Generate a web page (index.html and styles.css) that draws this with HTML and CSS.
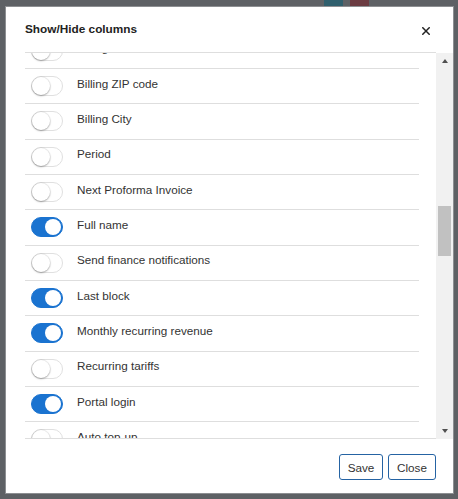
FILE: index.html
```html
<!DOCTYPE html>
<html lang="en">
<head>
<meta charset="utf-8">
<title>Show/Hide columns</title>
<link rel="stylesheet" href="styles.css">
</head>
<body>
<div class="backdrop-strip">
  <span class="chip chip-teal"></span>
  <span class="chip chip-red"></span>
</div>
<div class="modal">
  <div class="modal-header">
    <h2 class="modal-title">Show/Hide columns</h2>
    <button class="close-btn" aria-label="Close">
      <svg width="8" height="8" viewBox="0 0 8 8"><path d="M0.8 0.8L7.2 7.2M7.2 0.8L0.8 7.2" stroke="#222" stroke-width="1.5" stroke-linecap="square"/></svg>
    </button>
  </div>
  <div class="modal-body">
    <div class="viewport">
      <ul class="col-list">
        <li class="row"><span class="toggle"></span><span class="label">Billing address</span></li>
        <li class="row"><span class="toggle"></span><span class="label">Billing ZIP code</span></li>
        <li class="row"><span class="toggle"></span><span class="label">Billing City</span></li>
        <li class="row"><span class="toggle"></span><span class="label">Period</span></li>
        <li class="row"><span class="toggle"></span><span class="label">Next Proforma Invoice</span></li>
        <li class="row"><span class="toggle on"></span><span class="label">Full name</span></li>
        <li class="row"><span class="toggle"></span><span class="label">Send finance notifications</span></li>
        <li class="row"><span class="toggle on"></span><span class="label">Last block</span></li>
        <li class="row"><span class="toggle on"></span><span class="label">Monthly recurring revenue</span></li>
        <li class="row"><span class="toggle"></span><span class="label">Recurring tariffs</span></li>
        <li class="row"><span class="toggle on"></span><span class="label">Portal login</span></li>
        <li class="row"><span class="toggle"></span><span class="label">Auto top-up</span></li>
      </ul>
    </div>
    <div class="scrollbar">
      <span class="arrow arrow-up"></span>
      <span class="track"><span class="thumb"></span></span>
      <span class="arrow arrow-down"></span>
    </div>
  </div>
  <div class="modal-footer">
    <button class="btn btn-save">Save</button>
    <button class="btn btn-close">Close</button>
  </div>
</div>
</body>
</html>
```
FILE: styles.css
```css
* { box-sizing: border-box; }

html, body {
  margin: 0;
  padding: 0;
}

body {
  width: 458px;
  height: 499px;
  overflow: hidden;
  background: #5e6165;
  font-family: "Liberation Sans", Arial, sans-serif;
  color: #333;
}

.backdrop-strip {
  height: 6px;
  display: flex;
  padding-left: 324px;
  gap: 7px;
}

.chip {
  width: 19px;
  height: 6px;
}
.chip-teal { background: #2f5f6d; }
.chip-red { background: #6b3b41; }

.modal {
  margin-left: 5px;
  width: 449px;
  height: 488px;
  background: #fff;
  border: 1px solid #8d8f92;
  padding-left: 19px;
  display: flex;
  flex-direction: column;
}

.modal-header {
  height: 46px;
  margin-right: 17px;
  border-bottom: 1px solid #dedede;
  display: flex;
  align-items: flex-start;
  justify-content: space-between;
  flex-shrink: 0;
}

.modal-title {
  margin: 15px 0 0;
  font-size: 11.8px;
  line-height: 14px;
  font-weight: bold;
  color: #222;
}

.close-btn {
  margin: 20px 6px 0 0;
  padding: 0;
  border: 0;
  background: none;
  width: 8px;
  height: 8px;
  display: flex;
}

.modal-body {
  display: flex;
  height: 386px;
  flex-shrink: 0;
}

.viewport {
  width: 411px;
  height: 386px;
  overflow: hidden;
  border-bottom: 1px solid #dedede;
}

.col-list {
  list-style: none;
  margin: -19.33px 0 0;
  padding: 0;
  width: 394px;
}

.row {
  height: 35.333px;
  border-bottom: 1px solid #dedede;
  display: flex;
  align-items: center;
  padding-left: 6px;
}

.toggle {
  width: 32px;
  height: 20px;
  border-radius: 10px;
  border: 1px solid #e0e0e0;
  background: #fff;
  display: flex;
  align-items: center;
  padding: 0;
  flex-shrink: 0;
}

.toggle::after {
  content: "";
  width: 18px;
  height: 18px;
  border-radius: 50%;
  background: #fff;
  box-shadow: 0 1px 2px rgba(0,0,0,0.28), 0 0 0 1px rgba(0,0,0,0.06);
}

.toggle.on {
  background: #1a73d0;
  border-color: #1a73d0;
  justify-content: flex-end;
  padding-right: 1px;
}

.toggle.on::after {
  width: 16px;
  height: 16px;
  box-shadow: none;
}

.label {
  margin-left: 14px;
  margin-bottom: 5px;
  font-size: 11.7px;
  line-height: 14px;
  color: #333;
  white-space: nowrap;
}

.scrollbar {
  width: 17px;
  height: 386px;
  background: #f1f1f1;
  display: flex;
  flex-direction: column;
  align-items: center;
}

.arrow {
  width: 0;
  height: 0;
  border-left: 3.5px solid transparent;
  border-right: 3.5px solid transparent;
  flex-shrink: 0;
}

.arrow-up {
  margin-top: 6px;
  border-bottom: 4px solid #505050;
}

.arrow-down {
  margin-bottom: 6px;
  border-top: 4px solid #505050;
}

.track {
  flex: 1;
  width: 100%;
  display: flex;
  flex-direction: column;
  align-items: center;
  padding-top: 143px;
}

.thumb {
  width: 13px;
  height: 50px;
  background: #c1c1c1;
}

.modal-footer {
  display: flex;
  justify-content: flex-end;
  gap: 5px;
  padding: 15px 17px 0 0;
}

.btn {
  height: 26px;
  padding: 0;
  background: #fff;
  border: 1px solid #2563a3;
  border-radius: 3px;
  font-family: "Liberation Sans", Arial, sans-serif;
  font-size: 11.7px;
  color: #333;
}

.btn-save { width: 44px; }
.btn-close { width: 48px; }
```
